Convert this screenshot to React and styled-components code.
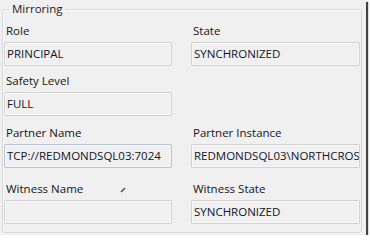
import React from 'react'
import styled, { createGlobalStyle } from 'styled-components'

const GlobalStyle = createGlobalStyle`
  html, body {
    margin: 0;
    padding: 0;
    background: #ffffff;
  }
  body {
    font-family: "Open Sans", "Noto Sans", "DejaVu Sans", sans-serif;
    font-size: 11.5px;
  }
`

const rows = [
  { top: 0, left: { label: 'Role', value: 'PRINCIPAL' }, right: { label: 'State', value: 'SYNCHRONIZED' } },
  { top: 7, left: { label: 'Safety Level', value: 'FULL' } },
  { top: 9, left: { label: 'Partner Name', value: 'TCP://REDMONDSQL03:7024', focus: true }, right: { label: 'Partner Instance', value: 'REDMONDSQL03\\NORTHCROSS' } },
  { top: 13, left: { label: 'Witness Name', value: '' }, right: { label: 'Witness State', value: 'SYNCHRONIZED' } },
]

const App = () => {
  return (
    <>
      <GlobalStyle />
      <Window>
        <GroupBox>
          <Legend>Mirroring</Legend>
          <FieldGrid>
            {rows.map((row, i) => (
              <React.Fragment key={i}>
                <Field $top={row.top}>
                  <Label>{row.left.label}</Label>
                  <TextBox $focus={row.left.focus}>{row.left.value}</TextBox>
                </Field>
                {row.right ? (
                  <Field $top={row.top}>
                    <Label>{row.right.label}</Label>
                    <TextBox>{row.right.value}</TextBox>
                  </Field>
                ) : <div />}
              </React.Fragment>
            ))}
          </FieldGrid>
          {/* stray mouse pointer in the capture */}
          <Cursor width="6" height="6" viewBox="0 0 6 6">
            <path d="M1 5 L5 1" stroke="#555" strokeWidth="1.6" />
          </Cursor>
        </GroupBox>
      </Window>
    </>
  )
}

const Window = styled.div`
  width: 366px;
  height: 235px;
  background: #f0f0f0;
  box-shadow: 2px 2px 1px rgba(45, 45, 45, 0.9);
  overflow: hidden;
`;

const GroupBox = styled.fieldset`
  position: relative;
  box-sizing: border-box;
  width: 360px;
  height: 231px;
  margin: 2px 0 0 2px;
  padding: 7px 1px 0 1px;
  border: 1px solid #d5d9dc;
  border-radius: 3px;
  box-shadow: inset 1px 1px 0 #fbfbfb;
`;

const Legend = styled.legend`
  margin-left: 5px;
  padding: 0 3px;
  line-height: 14px;
  color: #1a1a1a;
`;

const FieldGrid = styled.div`
  display: grid;
  grid-template-columns: 168px 169px;
  column-gap: 19px;
`;

const Field = styled.div`
  display: flex;
  flex-direction: column;
  margin-top: ${p => p.$top}px;
`;

const Label = styled.span`
  height: 16px;
  line-height: 16px;
  margin-bottom: 3px;
  padding-left: 2px;
  color: #151515;
`;

const TextBox = styled.div`
  box-sizing: border-box;
  height: 24px;
  line-height: 22px;
  padding: 0 2px;
  border: 1px solid ${p => (p.$focus ? '#b7c4d3' : '#d2d2d2')};
  border-radius: 2px;
  background: #f0f0f0;
  box-shadow: inset 0 0 0 1px #f7f7f7;
  color: #10152a;
  white-space: nowrap;
  overflow: hidden;
`;

const Cursor = styled.svg`
  position: absolute;
  left: 117px;
  top: 171px;
`;

export default App
